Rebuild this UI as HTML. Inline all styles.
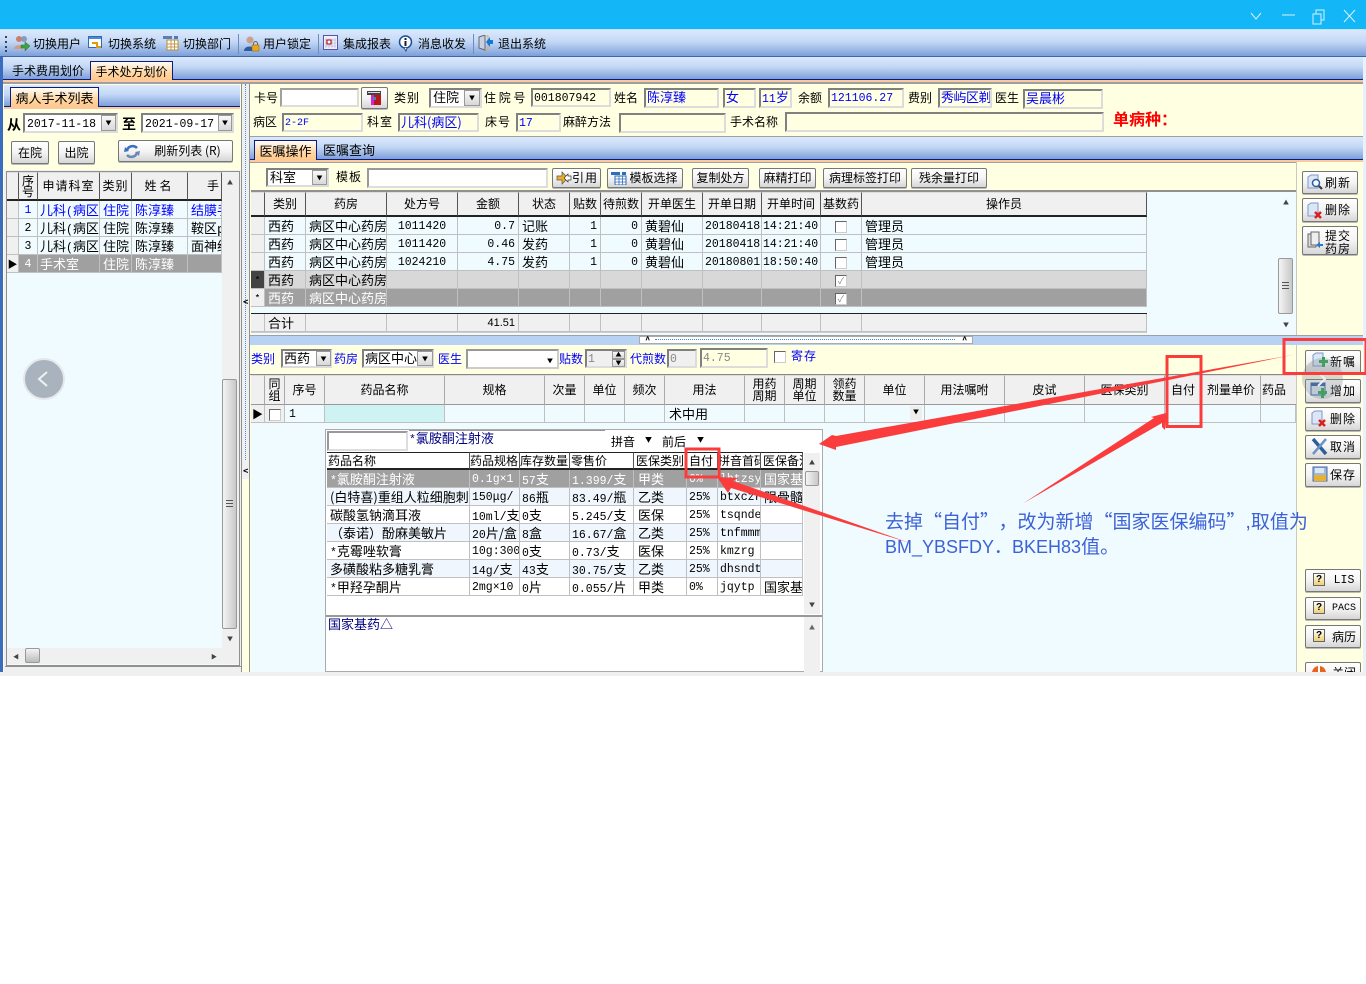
<!DOCTYPE html>
<html lang="zh"><head><meta charset="utf-8"><title>手术处方划价</title>
<style>
html,body{margin:0;padding:0;background:#fff}
#r{position:relative;width:1366px;height:984px;overflow:hidden;background:#fff;font:12px/14px "WenQuanYi Zen Hei","Noto Sans CJK SC",sans-serif;color:#000}
#a{position:absolute;left:0;top:0;width:1366px;height:672px;overflow:hidden;background:#ffffe1}
#r div,#r table,#r svg{position:absolute}
.g{background:linear-gradient(#dbe9fc,#c3d8f6 45%,#7d9fd8)}
.t{white-space:nowrap}
.bl{color:#00f}
.f{box-sizing:border-box;border:2px solid;border-color:#808080 #dcdcdc #dcdcdc #808080;background:#ffffe1;color:#00f;padding:0 1px;white-space:nowrap;overflow:hidden;line-height:14px;font-size:13px}
.m{font-family:"Liberation Mono",monospace;font-size:11.5px}
.f.m{padding-top:2px}
.w{background:#fff;color:#000}
.d{background:#f0f0f0;color:#888}
.b{box-sizing:border-box;border:1px solid #777;border-radius:2px;background:linear-gradient(#fff,#f4f4f4 50%,#d6d6d6);text-align:center;white-space:nowrap;box-shadow:0 1px 0 #bbb;line-height:18px}
.ar{box-sizing:border-box;background:linear-gradient(#f8f8f8,#d8d8d8);border:1px solid #999;text-align:center;font-size:6px;line-height:14px}
.tab{box-sizing:border-box;border:1px solid #0b1c80;border-bottom:0;background:linear-gradient(#fffdf8,#ffd9a8 55%,#ffc88c);text-align:center;white-space:nowrap;line-height:19px}
table{border-collapse:separate;border-spacing:0;table-layout:fixed}
td,th{overflow:hidden;white-space:nowrap;box-sizing:border-box;height:18px;line-height:14px;text-align:left;font-weight:400}
th{padding:0 1px;background:#f0f0f0;text-align:center;border-right:1px solid #555;border-bottom:2px solid #222;border-top:1px solid #ddd}
td{padding:1px 1px 0 3px;font-size:13px;border-right:1px solid #c0c0c0;border-bottom:1px solid #c0c0c0}
td.m{font-size:11.5px;padding-top:3px}
td .m{font-size:11.5px;line-height:10px}
.gc td{background:#f0fbff}
tr.s td{background:#a0a0a0;color:#fff}
tr.l td{background:#d8d8d8}
tr.e td{background:#f0f6fd}
tr.wh td{background:#fff}
td.i{background:#f0f0f0!important;text-align:center;padding:0;font-size:10px;line-height:14px;color:#000!important}
td.c{text-align:center;padding-left:1px}.rt{text-align:right;padding-right:3px}
td.rt{padding-right:3px}
.cb{display:inline-block;box-sizing:border-box;width:12px;height:12px;background:#fff;border:1px solid;border-color:#666 #ccc #ccc #666;vertical-align:middle;font-size:9px;line-height:10px;text-align:center;color:#888}
.sb{background:#f0f0f0}
.th{box-sizing:border-box;border:1px solid #999;border-radius:2px;background:linear-gradient(90deg,#f4f4f4,#c8c8c8)}
</style></head><body><div id="r">
<div id="a">
<!-- title -->
<div style="left:0;top:0;width:1366px;height:29px;background:#13b7f8"></div>
<div style="left:0;top:29px;width:1366px;height:1px;background:#bfe6fb"></div>
<svg style="left:1245px;top:6px" width="121" height="20" fill="none" stroke="#d8f0fd" stroke-width="1"><path d="M6 7l5 6 5-6M37 9h13M68 8h8v10h-8zM71 8V4h8v10h-3M99 4l11 12M110 4L99 16"/></svg>
<!-- toolbar -->
<div class="g" style="left:0;top:30px;width:1366px;height:26px"></div>
<div style="left:0;top:56px;width:1366px;height:1px;background:#3f65ac"></div>
<svg style="left:4px;top:35px" width="4" height="18" fill="#345"><rect x="1" y="1" width="2" height="2"/><rect x="1" y="6" width="2" height="2"/><rect x="1" y="11" width="2" height="2"/><rect x="1" y="15" width="2" height="2"/></svg>
<svg style="left:13px;top:35px" width="17" height="17"><circle cx="6" cy="4" r="3" fill="#c97f6a"/><circle cx="11" cy="4" r="3" fill="#889bbd"/><path d="M1 14c0-5 9-5 9 0z" fill="#d99a80"/><path d="M8 10h4V7l5 4-5 5v-3H8z" fill="#3da43d" stroke="#25702a" stroke-width=".5"/></svg>
<svg style="left:88px;top:36px" width="16" height="16"><rect x=".5" y=".5" width="13" height="11" fill="#fff" stroke="#2b6cb5"/><rect x="1" y="1" width="12" height="2" fill="#4c8ad0"/><path d="M4 7h5v4h4" fill="none" stroke="#e09a10" stroke-width="2"/></svg>
<svg style="left:163px;top:35px" width="16" height="16"><rect x="0" y="1" width="9" height="3" fill="#5a7fb5"/><rect x="4" y="5" width="11" height="10" fill="#fff" stroke="#b98a3a"/><path d="M4 9h11M4 12h11M8 5v10M11.500 5v10" stroke="#c49a50"/><rect x="11" y="1" width="4" height="3" fill="#4a7bc0"/></svg>
<div style="left:238px;top:34px;width:1px;height:20px;background:#6f8bb8"></div>
<svg style="left:244px;top:36px" width="16" height="16"><circle cx="6" cy="4" r="3.500" fill="#caa08c"/><path d="M0 15c0-6 11-6 11 0z" fill="#2c5c9e"/><rect x="8" y="9" width="7" height="6" fill="#e8a818" stroke="#8a5f10" stroke-width=".5"/><path d="M9.500 9V7.500a2 2 0 014 0V9" fill="none" stroke="#666"/></svg>
<div style="left:318px;top:34px;width:1px;height:20px;background:#6f8bb8"></div>
<svg style="left:323px;top:35px" width="16" height="16"><rect x=".5" y=".5" width="14" height="14" fill="#f0f0fa" stroke="#55a"/><path d="M3 3v10M6 3v10M9 3v10M12 3v10M2 5h11M2 8h11M2 11h11" stroke="#bbd" stroke-width=".7"/><rect x="4" y="5" width="4" height="4" fill="#fff" stroke="#a00"/></svg>
<svg style="left:398px;top:35px" width="15" height="17"><circle cx="7.500" cy="7" r="6" fill="#fff" stroke="#1a4f96" stroke-width="1.500"/><rect x="6.500" y="3" width="2" height="2" fill="#123"/><rect x="6.500" y="6" width="2" height="5" fill="#123"/><path d="M6 13l2 3 1-3" fill="#fff" stroke="#1a4f96"/></svg>
<div style="left:473px;top:34px;width:1px;height:20px;background:#6f8bb8"></div>
<svg style="left:478px;top:35px" width="16" height="16"><path d="M1 2l6-2v15l-6-2z" fill="#c8d2e2" stroke="#667"/><path d="M7 1h3v13H7" fill="none" stroke="#e0b050"/><path d="M15 5h-3V2L8 7l4 5V9h3z" fill="#1878d8"/></svg>
<div class="t" style="left:33px;top:37px">切换用户</div><div class="t" style="left:108px;top:37px">切换系统</div><div class="t" style="left:183px;top:37px">切换部门</div><div class="t" style="left:263px;top:37px">用户锁定</div><div class="t" style="left:343px;top:37px">集成报表</div><div class="t" style="left:418px;top:37px">消息收发</div><div class="t" style="left:498px;top:37px">退出系统</div>
<!-- tab row -->
<div class="g" style="left:2px;top:57px;width:1361px;height:22px"></div>
<div style="left:2px;top:79px;width:1361px;height:1px;background:#0b1c80"></div>
<div style="left:2px;top:80px;width:1361px;height:2px;background:#fcc8a0"></div>
<div style="left:2px;top:82px;width:1361px;height:2px;background:#a0a0a0"></div>
<div class="t" style="left:12px;top:64px">手术费用划价</div>
<div class="tab" style="left:90px;top:61px;width:83px;height:19px">手术处方划价</div>
<div style="left:0;top:57px;width:3px;height:615px;background:#3a6cc0"></div>
<div style="left:1363px;top:57px;width:3px;height:615px;background:#e8f2fc"></div>
<!-- left panel -->
<div class="g" style="left:4px;top:85px;width:236px;height:21px"></div>
<div style="left:4px;top:106px;width:236px;height:1px;background:#0b1c80"></div>
<div style="left:4px;top:107px;width:236px;height:2px;background:#fcc8a0"></div>
<div class="tab" style="left:10px;top:87px;width:89px;height:20px;font-size:13px">病人手术列表</div>
<div class="t" style="left:7px;top:118px;font-size:14px;font-weight:700">从</div>
<div class="f w m" style="left:23px;top:113px;width:95px;height:20px;padding:3px 0 0 2px">2017-11-18</div>
<div class="ar" style="left:101px;top:115px;width:15px;height:16px">▼</div>
<div class="t" style="left:122px;top:117px;font-size:14px;font-weight:700">至</div>
<div class="f w m" style="left:141px;top:113px;width:93px;height:20px;padding:3px 0 0 2px">2021-09-17</div>
<div class="ar" style="left:218px;top:115px;width:14px;height:16px">▼</div>
<div class="b" style="left:11px;top:141px;width:38px;height:23px;line-height:21px">在院</div>
<div class="b" style="left:58px;top:141px;width:37px;height:23px;line-height:21px">出院</div>
<div class="b" style="left:118px;top:140px;width:115px;height:22px;line-height:20px;padding-left:24px">刷新列表 (R)</div>
<svg style="left:124px;top:144px" width="16" height="15" fill="none" stroke-width="2.500"><path d="M13 4A6 6 0 003 6" stroke="#3a6fc0"/><path d="M3 11a6 6 0 0010-2" stroke="#6a88b0"/><path d="M1 3l4 4-5 1z" fill="#3a6fc0" stroke="none"/><path d="M15 12l-4-4 5-1z" fill="#6a88b0" stroke="none"/></svg>
<div style="left:4px;top:170px;width:238px;height:503px;background:#f0f0f0"></div>
<div style="left:6px;top:171px;width:234px;height:495px;background:#f0fbff;border:1px solid #909090;box-sizing:border-box"></div>
<table class="gc" style="left:7px;top:172px;width:215px"><colgroup><col style="width:12px"><col style="width:19px"><col style="width:62px"><col style="width:32px"><col style="width:56px"><col style="width:34px"></colgroup>
<tr><th style="height:29px"></th><th style="height:29px;line-height:11px;font-size:12px;padding:0">序<br>号</th><th style="height:29px;letter-spacing:1px">申请科室</th><th style="height:29px;letter-spacing:1px">类别</th><th style="height:29px;letter-spacing:3px">姓名</th><th style="height:29px;text-align:left;padding-left:19px;letter-spacing:3px">手术</th></tr>
<tr class="bl" style="color:#00f"><td class="i"></td><td class="c m">1</td><td style="padding-left:2px;padding-right:0">儿科<span class="m">(</span>病区</td><td>住院</td><td>陈淳臻</td><td>结膜手</td></tr>
<tr><td class="i"></td><td class="c m">2</td><td style="padding-left:2px;padding-right:0">儿科<span class="m">(</span>病区</td><td>住院</td><td>陈淳臻</td><td>鞍区p</td></tr>
<tr><td class="i"></td><td class="c m">3</td><td style="padding-left:2px;padding-right:0">儿科<span class="m">(</span>病区</td><td>住院</td><td>陈淳臻</td><td>面神经</td></tr>
<tr class="s"><td class="i">▶</td><td class="c m">4</td><td style="padding-left:2px;padding-right:0">手术室</td><td>住院</td><td>陈淳臻</td><td></td></tr></table>
<div class="sb" style="left:222px;top:172px;width:17px;height:476px"></div>
<div class="t" style="left:227px;top:176px;font-size:6px;color:#444">▲</div>
<div class="th" style="left:222px;top:379px;width:15px;height:250px"></div>
<div style="left:226px;top:500px;width:7px;height:7px;border-top:1px solid #555;border-bottom:1px solid #555;box-sizing:border-box"></div><div style="left:226px;top:503px;width:7px;height:1px;background:#555"></div>
<div class="t" style="left:227px;top:632px;font-size:6px;color:#444">▼</div>
<div class="sb" style="left:7px;top:648px;width:232px;height:16px"></div>
<div class="t" style="left:13px;top:650px;font-size:6px;color:#444">◀</div><div class="t" style="left:211px;top:650px;font-size:6px;color:#444">▶</div>
<div class="th" style="left:25px;top:648px;width:15px;height:15px;background:linear-gradient(#f4f4f4,#bbb)"></div>
<div style="left:23px;top:358px;width:42px;height:42px;border-radius:50%;box-sizing:border-box;border:2px solid #e4e8ea;background:#a8b3bd"></div>
<svg style="left:36px;top:370px" width="14" height="18" fill="none" stroke="#eef1f3" stroke-width="2"><path d="M11 2L3 9l8 7"/></svg>
<div style="left:5px;top:666px;width:236px;height:1px;background:#909090"></div>
<!-- splitter -->
<div style="left:241px;top:84px;width:1px;height:588px;background:#909090"></div>
<div style="left:242px;top:84px;width:8px;height:395px;background:#f0f0f0"></div>
<div style="left:245px;top:84px;width:1px;height:376px;border-left:1px dotted #4a90d9"></div>
<div class="t" style="left:243px;top:295px;font-size:9px;font-weight:700">&lt;</div>
<div class="t" style="left:243px;top:464px;font-size:9px;font-weight:700">&lt;</div>
<div style="left:249px;top:84px;width:1px;height:588px;background:#909090"></div>
<!-- info panel -->
<div style="left:250px;top:84px;width:1113px;height:52px;background:#ffffe1"></div>
<div style="left:250px;top:136px;width:1113px;height:1px;background:#a0a0a0"></div>
<div class="t" style="left:254px;top:91px">卡号</div>
<div class="f w" style="left:280px;top:88px;width:79px;height:19px;border-color:#a0a0a0 #ddd #ddd #a0a0a0"></div>
<div class="b" style="left:361px;top:87px;width:27px;height:22px"></div>
<svg style="left:366px;top:90px" width="17" height="16"><rect x="1" y="1" width="14" height="4" fill="#444"/><rect x="2" y="2" width="12" height="1" fill="#ddd"/><rect x="5" y="5" width="7" height="10" fill="#e020d0"/><rect x="8" y="5" width="7" height="10" fill="#b81818"/><rect x="7" y="7" width="3" height="3" fill="#38c"/></svg>
<div class="t" style="left:394px;top:91px;letter-spacing:1px">类别</div>
<div class="f w" style="left:429px;top:88px;width:53px;height:20px;padding-left:2px">住院</div>
<div class="ar" style="left:464px;top:90px;width:16px;height:16px">▼</div>
<div class="t" style="left:484px;top:91px">住 院 号</div>
<div class="f w m" style="left:531px;top:88px;width:80px;height:19px;background:#ffffe1">001807942</div>
<div class="t" style="left:614px;top:91px">姓名</div>
<div class="f" style="left:644px;top:88px;width:75px;height:20px">陈淳臻</div>
<div class="f" style="left:723px;top:88px;width:33px;height:20px">女</div>
<div class="f" style="left:759px;top:88px;width:33px;height:20px"><span class="m">11</span>岁</div>
<div class="t" style="left:798px;top:91px">余额</div>
<div class="f m" style="left:828px;top:88px;width:76px;height:20px">121106.27</div>
<div class="t" style="left:908px;top:91px">费别</div>
<div class="f" style="left:938px;top:88px;width:54px;height:20px;letter-spacing:-.5px">秀屿区剃</div>
<div class="t" style="left:995px;top:91px">医生</div>
<div class="f" style="left:1023px;top:89px;width:80px;height:20px">吴晨彬</div>
<div class="t" style="left:253px;top:115px">病区</div>
<div class="f m" style="left:282px;top:113px;width:81px;height:19px;font-size:10px">2-2F</div>
<div class="t" style="left:367px;top:115px;letter-spacing:1px">科室</div>
<div class="f" style="left:398px;top:113px;width:81px;height:19px">儿科(病区)</div>
<div class="t" style="left:485px;top:115px;letter-spacing:1px">床号</div>
<div class="f m" style="left:516px;top:113px;width:45px;height:19px">17</div>
<div class="t" style="left:563px;top:115px">麻醉方法</div>
<div class="f" style="left:619px;top:113px;width:107px;height:20px"></div>
<div class="t" style="left:730px;top:115px">手术名称</div>
<div class="f" style="left:785px;top:112px;width:319px;height:20px"></div>
<div class="t" style="left:1113px;top:109px;font-size:16px;line-height:18px;font-weight:700;color:#f00">单病种：</div>
<!-- inner tabs -->
<div class="g" style="left:250px;top:137px;width:1113px;height:22px"></div>
<div style="left:250px;top:159px;width:1113px;height:1px;background:#0b1c80"></div>
<div style="left:250px;top:160px;width:1113px;height:2px;background:#fcc8a0"></div>
<div class="tab" style="left:254px;top:140px;width:63px;height:20px;font-size:13px">医嘱操作</div>
<div class="t" style="left:323px;top:143px;font-size:13px">医嘱查询</div>
<!-- toolbar 2 -->
<div style="left:250px;top:162px;width:1046px;height:28px;background:#ffffe1;border-top:1px solid #a0a0a0;box-sizing:border-box"></div>
<div class="f w" style="left:266px;top:168px;width:63px;height:19px;padding-left:2px">科室</div>
<div class="ar" style="left:312px;top:170px;width:15px;height:15px">▼</div>
<div class="t" style="left:336px;top:170px;letter-spacing:1px">模板</div>
<div class="f w" style="left:367px;top:168px;width:181px;height:20px;background:#fff;border-color:#999 #ddd #ddd #999"></div>
<div class="b" style="left:552px;top:168px;width:49px;height:20px;padding-left:17px;letter-spacing:1px">引用</div>
<svg style="left:556px;top:171px" width="16" height="14"><path d="M1 5h5V1l6 6-6 6V9H1z" fill="#f0b020" stroke="#555" stroke-width=".7"/><path d="M15 5h-3V3L8 7l4 4V9h3z" fill="#fff" stroke="#333" stroke-width=".7"/></svg>
<div class="b" style="left:607px;top:168px;width:76px;height:20px;padding-left:17px">模板选择</div>
<svg style="left:611px;top:171px" width="16" height="14"><rect x="0" y="1" width="9" height="3" fill="#2f6db8"/><rect x="4" y="5" width="11" height="9" fill="#fff" stroke="#2f6db8"/><path d="M4 8h11M4 11h11M8 5v9M11.500 5v9" stroke="#2f6db8" stroke-width=".8"/><rect x="11" y="1" width="4" height="3" fill="#2f6db8"/></svg>
<div class="b" style="left:692px;top:168px;width:57px;height:20px">复制处方</div>
<div class="b" style="left:759px;top:168px;width:57px;height:20px">麻精打印</div>
<div class="b" style="left:823px;top:168px;width:84px;height:20px">病理标签打印</div>
<div class="b" style="left:911px;top:168px;width:76px;height:20px">残余量打印</div>
<!-- main grid -->
<div style="left:251px;top:190px;width:1045px;height:145px;background:#f0fbff"></div>
<div style="left:251px;top:190px;width:1045px;height:2px;background:#909090"></div>
<table class="gc" style="left:251px;top:192px;width:896px"><colgroup><col style="width:14px"><col style="width:41px"><col style="width:81px"><col style="width:71px"><col style="width:61px"><col style="width:51px"><col style="width:31px"><col style="width:41px"><col style="width:61px"><col style="width:59px"><col style="width:59px"><col style="width:41px"><col style="width:285px"></colgroup>
<tr><th style="height:25px"></th><th style="height:25px">类别</th><th style="height:25px">药房</th><th style="height:25px">处方号</th><th style="height:25px">金额</th><th style="height:25px">状态</th><th style="height:25px;padding:0">贴数</th><th style="height:25px;padding:0">待煎数</th><th style="height:25px">开单医生</th><th style="height:25px">开单日期</th><th style="height:25px">开单时间</th><th style="height:25px;padding:0">基数药</th><th style="height:25px">操作员</th></tr>
<tr><td class="i"></td><td>西药</td><td>病区中心药房</td><td class="c m">1011420</td><td class="rt m">0.7</td><td>记账</td><td class="rt m">1</td><td class="rt m">0</td><td>黄碧仙</td><td class="m" style="padding-left:2px;padding-right:0">20180418</td><td class="m" style="padding-left:1px;padding-right:0">14:21:40</td><td class="c"><span class="cb"></span></td><td>管理员</td></tr>
<tr><td class="i"></td><td>西药</td><td>病区中心药房</td><td class="c m">1011420</td><td class="rt m">0.46</td><td>发药</td><td class="rt m">1</td><td class="rt m">0</td><td>黄碧仙</td><td class="m" style="padding-left:2px;padding-right:0">20180418</td><td class="m" style="padding-left:1px;padding-right:0">14:21:40</td><td class="c"><span class="cb"></span></td><td>管理员</td></tr>
<tr><td class="i"></td><td>西药</td><td>病区中心药房</td><td class="c m">1024210</td><td class="rt m">4.75</td><td>发药</td><td class="rt m">1</td><td class="rt m">0</td><td>黄碧仙</td><td class="m" style="padding-left:2px;padding-right:0">20180801</td><td class="m" style="padding-left:1px;padding-right:0">18:50:40</td><td class="c"><span class="cb"></span></td><td>管理员</td></tr>
<tr class="l"><td class="i" style="background:#444!important">*</td><td>西药</td><td>病区中心药房</td><td></td><td></td><td></td><td></td><td></td><td></td><td></td><td></td><td class="c"><span class="cb">✓</span></td><td></td></tr>
<tr class="s"><td class="i">*</td><td>西药</td><td>病区中心药房</td><td></td><td></td><td></td><td></td><td></td><td></td><td></td><td></td><td class="c"><span class="cb">✓</span></td><td></td></tr></table>
<table style="left:251px;top:313px;width:896px;border-top:1px solid #222;border-bottom:1px solid #ccc"><colgroup><col style="width:14px"><col style="width:41px"><col style="width:81px"><col style="width:71px"><col style="width:61px"><col style="width:51px"><col style="width:31px"><col style="width:41px"><col style="width:61px"><col style="width:59px"><col style="width:59px"><col style="width:41px"><col style="width:285px"></colgroup>
<tr style="background:#f0f0f0"><td style="background:#f0f0f0"></td><td>合计</td><td></td><td></td><td class="rt" style="font:11px/14px 'Liberation Sans'">41.51</td><td></td><td></td><td></td><td></td><td></td><td></td><td></td><td></td></tr></table>
<div class="t" style="left:1283px;top:196px;font-size:6px;color:#444">▲</div>
<div class="th" style="left:1278px;top:258px;width:15px;height:56px"></div>
<div style="left:1282px;top:282px;width:7px;height:7px;border-top:1px solid #555;border-bottom:1px solid #555;box-sizing:border-box"></div><div style="left:1282px;top:285px;width:7px;height:1px;background:#555"></div>
<div class="t" style="left:1283px;top:318px;font-size:6px;color:#444">▼</div>
<!-- right buttons top -->
<div style="left:1296px;top:162px;width:1px;height:510px;background:#c8c8c8"></div>
<div class="b" style="left:1302px;top:171px;width:56px;height:23px;line-height:21px;padding-left:16px;letter-spacing:1px">刷新</div>
<svg style="left:1307px;top:174px" width="17" height="18" fill="none"><path d="M1 3l3-2h7v13H1z" fill="#dce6f4" stroke="#7a99c8"/><circle cx="9" cy="9" r="3.500" fill="#fff" stroke="#2a5fa0" stroke-width="1.500"/><path d="M12 12l3 3" stroke="#333" stroke-width="2"/></svg>
<div class="b" style="left:1302px;top:198px;width:56px;height:24px;line-height:22px;padding-left:16px;letter-spacing:1px">删除</div>
<svg style="left:1307px;top:202px" width="17" height="18" fill="none"><path d="M1 3l3-2h7v13H1z" fill="#dce6f4" stroke="#7a99c8"/><path d="M8 10l6 6M14 10l-6 6" stroke="#d82020" stroke-width="2.500"/></svg>
<div class="b" style="left:1302px;top:226px;width:56px;height:29px;line-height:13px;padding:2px 0 0 22px;text-align:left;white-space:normal;letter-spacing:1px">提交药房</div>
<svg style="left:1307px;top:231px" width="17" height="19" fill="none"><rect x="1" y="3" width="8" height="13" fill="#ddd" stroke="#666"/><rect x="4" y="1" width="8" height="13" fill="#eee" stroke="#666"/><path d="M16 13h-3v-2l-4 3 4 3v-2h3z" fill="#2a78c8"/></svg>
<!-- splitter 2 -->
<div style="left:250px;top:335px;width:1113px;height:1px;background:#a0a0a0"></div>
<div style="left:250px;top:336px;width:1113px;height:9px;background:#b8d2f4"></div>
<div style="left:639px;top:336px;width:334px;height:8px;background:#fff;border:1px solid #aaa;box-sizing:border-box"></div>
<div style="left:655px;top:339px;width:300px;height:1px;border-top:1px dotted #3a8ae0"></div>
<div class="t" style="left:645px;top:335px;font-size:9px;line-height:10px;font-weight:700">^</div><div class="t" style="left:962px;top:335px;font-size:9px;line-height:10px;font-weight:700">^</div>
<!-- form -->
<div class="t bl" style="left:251px;top:352px">类别</div>
<div class="f w" style="left:281px;top:349px;width:51px;height:19px;padding-left:1px">西药</div>
<div class="ar" style="left:316px;top:351px;width:15px;height:15px">▼</div>
<div class="t bl" style="left:334px;top:352px">药房</div>
<div class="f w" style="left:362px;top:349px;width:72px;height:19px;padding-left:1px">病区中心药</div>
<div class="ar" style="left:417px;top:351px;width:16px;height:15px">▼</div>
<div class="t bl" style="left:438px;top:352px">医生</div>
<div class="f w" style="left:466px;top:349px;width:93px;height:20px;border-color:#999 #ccc #ccc #999"></div>
<div class="t" style="left:547px;top:354px;font-size:6px">▼</div>
<div class="t bl" style="left:559px;top:352px">贴数</div>
<div class="f d m" style="left:585px;top:349px;width:42px;height:19px">1</div>
<div class="ar" style="left:612px;top:351px;width:13px;height:8px;line-height:6px;font-size:6px">▲</div><div class="ar" style="left:612px;top:359px;width:13px;height:8px;line-height:6px;font-size:6px">▼</div>
<div class="t bl" style="left:630px;top:352px">代煎数</div>
<div class="f d m" style="left:667px;top:349px;width:30px;height:19px">0</div>
<div class="f m" style="left:700px;top:348px;width:68px;height:20px;color:#888">4.75</div>
<span class="cb" style="position:absolute;left:774px;top:351px"></span>
<div class="t bl" style="left:791px;top:349px;letter-spacing:1px">寄存</div>
<!-- grid 2 -->
<div style="left:251px;top:375px;width:1045px;height:297px;background:#f0fbff"></div>
<div style="left:250px;top:374px;width:1046px;height:1px;background:#888"></div>
<table class="gc" style="left:251px;top:375px;width:1045px"><colgroup><col style="width:14px"><col style="width:20px"><col style="width:40px"><col style="width:120px"><col style="width:100px"><col style="width:40px"><col style="width:40px"><col style="width:40px"><col style="width:80px"><col style="width:40px"><col style="width:40px"><col style="width:40px"><col style="width:60px"><col style="width:80px"><col style="width:80px"><col style="width:80px"><col style="width:37px"><col style="width:59px"><col style="width:35px"></colgroup>
<tr><th style="height:30px;border-bottom:1px solid #999;border-right-color:#aaa"></th><th style="height:30px;line-height:12px;padding:0;border-bottom:1px solid #999;border-right-color:#aaa">同<br>组</th><th style="height:30px;border-bottom:1px solid #999;border-right-color:#aaa">序号</th><th style="height:30px;border-bottom:1px solid #999;border-right-color:#aaa">药品名称</th><th style="height:30px;border-bottom:1px solid #999;border-right-color:#aaa">规格</th><th style="height:30px;border-bottom:1px solid #999;border-right-color:#aaa">次量</th><th style="height:30px;border-bottom:1px solid #999;border-right-color:#aaa">单位</th><th style="height:30px;border-bottom:1px solid #999;border-right-color:#aaa">频次</th><th style="height:30px;border-bottom:1px solid #999;border-right-color:#aaa">用法</th><th style="height:30px;line-height:12px;border-bottom:1px solid #999;border-right-color:#aaa">用药<br>周期</th><th style="height:30px;line-height:12px;border-bottom:1px solid #999;border-right-color:#aaa">周期<br>单位</th><th style="height:30px;line-height:12px;border-bottom:1px solid #999;border-right-color:#aaa">领药<br>数量</th><th style="height:30px;border-bottom:1px solid #999;border-right-color:#aaa">单位</th><th style="height:30px;border-bottom:1px solid #999;border-right-color:#aaa">用法嘱咐</th><th style="height:30px;border-bottom:1px solid #999;border-right-color:#aaa">皮试</th><th style="height:30px;border-bottom:1px solid #999;border-right-color:#aaa">医保类别</th><th style="height:30px;border-bottom:1px solid #999;border-right-color:#aaa">自付</th><th style="height:30px;padding:0;border-bottom:1px solid #999;border-right-color:#aaa">剂量单价</th><th style="height:30px;text-align:left;border-bottom:1px solid #999;border-right:0">药品</th></tr>
<tr><td class="i" style="font-size:11px">▶</td><td class="c" style="background:#f0f0f0;padding:0"><span class="cb"></span></td><td class="m" style="padding-left:4px">1</td><td style="background:#cff2f2"></td><td></td><td></td><td></td><td></td><td style="padding-left:4px">术中用</td><td></td><td></td><td></td><td></td><td></td><td></td><td></td><td></td><td></td><td></td></tr></table>
<div class="ar" style="left:910px;top:406px;width:12px;height:14px;background:#eee;border:0;line-height:12px;font-size:6px">▼</div>
<!-- popup -->
<div style="left:325px;top:429px;width:498px;height:243px;background:#fff;border:1px solid #aaa;box-sizing:border-box"></div>
<div class="f w" style="left:327px;top:431px;width:81px;height:20px;border-color:#999 #ddd #ddd #999"></div>
<div class="t" style="left:409px;top:431px;color:#000080;font-size:13px"><span class="m">*</span>氯胺酮注射液</div>
<div style="left:409px;top:430px;width:196px;height:1px;background:#999"></div>
<div class="t" style="left:611px;top:435px">拼音</div><div class="t" style="left:645px;top:433px;font-size:7px">▼</div>
<div class="t" style="left:662px;top:435px">前后</div><div class="t" style="left:697px;top:433px;font-size:7px">▼</div>
<table style="left:327px;top:452px;width:476px;border:0"><colgroup><col style="width:143px"><col style="width:50px"><col style="width:50px"><col style="width:64px"><col style="width:53px"><col style="width:31px"><col style="width:43px"><col style="width:42px"></colgroup>
<tr class="wh"><th style="height:18px;background:#fff;text-align:left;border-top:1px solid #222">药品名称</th><th style="height:18px;background:#fff;text-align:left;padding:0;border-top:1px solid #222">药品规格</th><th style="height:18px;background:#fff;text-align:left;padding:0;border-top:1px solid #222">库存数量</th><th style="height:18px;background:#fff;text-align:left;border-top:1px solid #222">零售价</th><th style="height:18px;background:#fff;text-align:left;padding:0 0 0 2px;border-top:1px solid #222">医保类别</th><th style="height:18px;background:#fff;text-align:left;padding:0 0 0 2px;border-top:1px solid #222">自付</th><th style="height:18px;background:#fff;text-align:left;padding:0;border-top:1px solid #222">拼音首码</th><th style="height:18px;background:#fff;text-align:left;padding:0 0 0 2px;border-top:1px solid #222">医保备注</th></tr>
<tr class="s"><td><span class="m">*</span>氯胺酮注射液</td><td class="m" style="padding-left:2px">0.1g×1</td><td style="padding-left:2px"><span class="m">57</span>支</td><td style="padding-left:2px"><span class="m">1.399/</span>支</td><td style="padding-left:4px">甲类</td><td class="m" style="padding-left:2px">0%</td><td class="m" style="padding-left:2px">lhtzsy</td><td>国家基</td></tr>
<tr class="e"><td>(白特喜)重组人粒细胞刺</td><td class="m" style="padding-left:2px">150μg/</td><td style="padding-left:2px"><span class="m">86</span>瓶</td><td style="padding-left:2px"><span class="m">83.49/</span>瓶</td><td style="padding-left:4px">乙类</td><td class="m" style="padding-left:2px">25%</td><td class="m" style="padding-left:2px">btxczr</td><td>限骨髓</td></tr>
<tr class="wh"><td>碳酸氢钠滴耳液</td><td style="padding-left:2px"><span class="m">10ml/</span>支</td><td style="padding-left:2px"><span class="m">0</span>支</td><td style="padding-left:2px"><span class="m">5.245/</span>支</td><td style="padding-left:4px">医保</td><td class="m" style="padding-left:2px">25%</td><td class="m" style="padding-left:2px">tsqnde</td><td></td></tr>
<tr class="e"><td>（泰诺）酚麻美敏片</td><td style="padding-left:2px"><span class="m">20</span>片/盒</td><td style="padding-left:2px"><span class="m">8</span>盒</td><td style="padding-left:2px"><span class="m">16.67/</span>盒</td><td style="padding-left:4px">乙类</td><td class="m" style="padding-left:2px">25%</td><td class="m" style="padding-left:2px">tnfmmm</td><td></td></tr>
<tr class="wh"><td><span class="m">*</span>克霉唑软膏</td><td class="m" style="padding-left:2px">10g:300</td><td style="padding-left:2px"><span class="m">0</span>支</td><td style="padding-left:2px"><span class="m">0.73/</span>支</td><td style="padding-left:4px">医保</td><td class="m" style="padding-left:2px">25%</td><td class="m" style="padding-left:2px">kmzrg</td><td></td></tr>
<tr class="e"><td>多磺酸粘多糖乳膏</td><td style="padding-left:2px"><span class="m">14g/</span>支</td><td style="padding-left:2px"><span class="m">43</span>支</td><td style="padding-left:2px"><span class="m">30.75/</span>支</td><td style="padding-left:4px">乙类</td><td class="m" style="padding-left:2px">25%</td><td class="m" style="padding-left:2px">dhsndt</td><td></td></tr>
<tr class="wh"><td><span class="m">*</span>甲羟孕酮片</td><td class="m" style="padding-left:2px">2mg×10</td><td style="padding-left:2px"><span class="m">0</span>片</td><td style="padding-left:2px"><span class="m">0.055/</span>片</td><td style="padding-left:4px">甲类</td><td class="m" style="padding-left:2px">0%</td><td class="m" style="padding-left:2px">jqytp</td><td>国家基</td></tr></table>
<div class="sb" style="left:804px;top:453px;width:16px;height:161px"></div>
<div class="t" style="left:809px;top:456px;font-size:6px;color:#444">▲</div>
<div class="th" style="left:805px;top:471px;width:14px;height:15px"></div>
<div class="t" style="left:809px;top:598px;font-size:6px;color:#444">▼</div>
<div style="left:326px;top:615px;width:496px;height:2px;background:#999"></div>
<div class="t" style="left:328px;top:617px;color:#000080;font-size:13px">国家基药△</div>
<div class="sb" style="left:804px;top:617px;width:16px;height:55px"></div>
<div class="t" style="left:809px;top:621px;font-size:6px;color:#666">▲</div>
<!-- right side lower -->
<div style="left:1297px;top:345px;width:66px;height:327px;background:#ffffe1"></div>
<div class="b" style="left:1305px;top:350px;width:56px;height:24px;line-height:22px;padding-left:20px;letter-spacing:1px">新嘱</div>
<svg style="left:1311px;top:352px" width="18" height="19"><path d="M2 3l3-2h7v13H2z" fill="#dce6f4" stroke="#7a99c8"/><path d="M8 8h3V5h3v3h3v3h-3v4h-3v-4H8z" fill="#25a84a"/></svg>
<div class="b" style="left:1305px;top:379px;width:56px;height:24px;line-height:22px;padding-left:20px;letter-spacing:1px">增加</div>
<svg style="left:1310px;top:382px" width="18" height="18"><rect x="1" y="1" width="14" height="12" fill="#dce6f4" stroke="#2a5fa0"/><rect x="1" y="1" width="14" height="3" fill="#2a5fa0"/><path d="M8 9h3V6h3v3h3v3h-3v4h-3v-4H8z" fill="#25a84a"/></svg>
<div class="b" style="left:1305px;top:407px;width:56px;height:24px;line-height:22px;padding-left:20px;letter-spacing:1px">删除</div>
<svg style="left:1311px;top:410px" width="17" height="18" fill="none"><path d="M1 3l3-2h7v13H1z" fill="#dce6f4" stroke="#7a99c8"/><path d="M8 10l6 6M14 10l-6 6" stroke="#d82020" stroke-width="2.500"/></svg>
<div class="b" style="left:1305px;top:435px;width:56px;height:24px;line-height:22px;padding-left:20px;letter-spacing:1px">取消</div>
<svg style="left:1311px;top:438px" width="17" height="17" fill="none"><path d="M2 1l13 15" stroke="#2a5f9e" stroke-width="3.500"/><path d="M15 1L2 16" stroke="#6f93c4" stroke-width="2.500"/></svg>
<div class="b" style="left:1305px;top:463px;width:56px;height:24px;line-height:22px;padding-left:20px;letter-spacing:1px">保存</div>
<svg style="left:1312px;top:466px" width="16" height="16"><rect x="1" y="1" width="14" height="14" fill="#9ab8e0" stroke="#4a6a9a"/><rect x="3" y="2" width="9" height="5" fill="#dce8f6"/><rect x="2" y="9" width="12" height="6" fill="#eab030"/></svg>
<div class="b m" style="left:1305px;top:569px;width:56px;height:23px;line-height:21px;padding-left:22px">LIS</div>
<div class="b m" style="left:1305px;top:597px;width:56px;height:23px;line-height:21px;padding-left:22px;font-size:10px">PACS</div>
<div class="b" style="left:1305px;top:625px;width:56px;height:23px;line-height:21px;padding-left:22px">病历</div>
<div class="t" style="left:1313px;top:573px;width:12px;height:13px;background:linear-gradient(#fff,#f0d070);border:1px solid #666;box-sizing:border-box;text-align:center;font:700 10px/11px 'Liberation Sans'">?</div>
<div class="t" style="left:1313px;top:601px;width:12px;height:13px;background:linear-gradient(#fff,#f0d070);border:1px solid #666;box-sizing:border-box;text-align:center;font:700 10px/11px 'Liberation Sans'">?</div>
<div class="t" style="left:1313px;top:629px;width:12px;height:13px;background:linear-gradient(#fff,#f0d070);border:1px solid #666;box-sizing:border-box;text-align:center;font:700 10px/11px 'Liberation Sans'">?</div>
<div class="b" style="left:1305px;top:662px;width:56px;height:24px;line-height:20px;padding-left:22px">关闭</div>
<svg style="left:1311px;top:665px" width="16" height="8"><path d="M1 8a7 7 0 0114 0z" fill="#e8641a"/><rect x="7" y="0" width="2" height="8" fill="#fff"/></svg>
<!-- faded circle -->
<div style="left:1302px;top:358px;width:41px;height:41px;border-radius:50%;background:rgba(130,140,150,.32)"></div>
<svg style="left:1316px;top:370px" width="12" height="18" fill="none" stroke="#eef1f3" stroke-width="2"><path d="M2 2l7 7-7 7"/></svg>
<!-- annotations -->
<svg style="left:0;top:0" width="1366" height="672" fill="#fb3c3c"><path d="M1295 354.500L836 436l-4-1-13 9 17 6 0-3z"/><path d="M1023 503.500L1154 418l-3-1 15-4-1 17-3-3 0-4z"/><path d="M910 543L733 481l5-3-21-1 11 16 3-5z"/><g fill="none" stroke="#fb3c3c" stroke-width="3"><path d="M1284 339.500h82v34h-82z"/><path d="M1167 356.500h34v70h-34z"/><path d="M686 449h33v28h-33z"/></g></svg>
<div class="t" style="left:885px;top:508px;font:19px/26px 'Noto Sans CJK SC',sans-serif;color:#3d62d6">去掉“自付”<span style="margin-left:9px">，</span>改为新增“国家医保编码”<span style="font-family:'Liberation Sans'">,</span>取值为</div>
<div class="t" style="left:885px;top:534px;font:18px/26px 'Liberation Sans','Noto Sans CJK SC',sans-serif;color:#3d62d6">BM_YBSFDY．BKEH83<span style="font-size:19px">值。</span></div>
</div>
<div style="left:0;top:672px;width:1366px;height:4px;background:#f0f0f0"></div>
</div></body></html>
